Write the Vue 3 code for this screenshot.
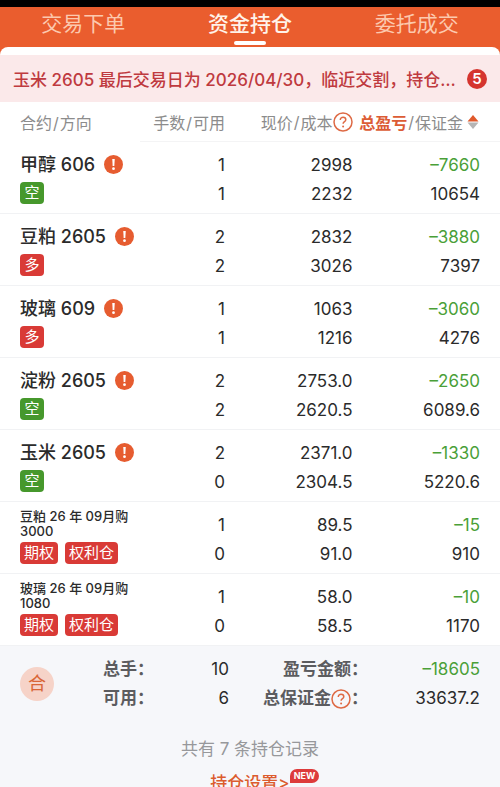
<script setup>
import { ref } from 'vue'

const tabs = ['交易下单', '资金持仓', '委托成交']
const activeTab = ref('资金持仓')

// side: short 空 / long 多 / option 期权
const positions = [
  { name: '甲醇 606', side: 'short', lots: [1, 1], price: ['2998', '2232'], profit: '7660', margin: '10654' },
  { name: '豆粕 2605', side: 'long', lots: [2, 2], price: ['2832', '3026'], profit: '3880', margin: '7397' },
  { name: '玻璃 609', side: 'long', lots: [1, 1], price: ['1063', '1216'], profit: '3060', margin: '4276' },
  { name: '淀粉 2605', side: 'short', lots: [2, 2], price: ['2753.0', '2620.5'], profit: '2650', margin: '6089.6' },
  { name: '玉米 2605', side: 'short', lots: [2, 0], price: ['2371.0', '2304.5'], profit: '1330', margin: '5220.6' },
  { name: '豆粕 26 年 09月购 3000', side: 'option', lots: [1, 0], price: ['89.5', '91.0'], profit: '15', margin: '910' },
  { name: '玻璃 26 年 09月购 1080', side: 'option', lots: [1, 0], price: ['58.0', '58.5'], profit: '10', margin: '1170' }
]

const tags = {
  short: ['空'],
  long: ['多'],
  option: ['期权', '权利仓']
}
</script>

<template>
  <div class="page">
    <nav class="tabs">
      <button
        v-for="tab in tabs"
        :key="tab"
        class="tab"
        :class="{ active: tab === activeTab }"
        @click="activeTab = tab"
      >{{ tab }}</button>
    </nav>

    <main class="sheet">
      <a href="#" class="notice">
        <span class="notice-text">玉米 2605 最后交易日为 2026/04/30，临近交割，持仓…</span>
        <span class="count">5</span>
      </a>

      <table class="positions">
        <thead>
          <tr>
            <th>合约<i>/</i>方向</th>
            <th>手数<i>/</i>可用</th>
            <th>
              <span class="head">现价<i>/</i>成本<button class="help" aria-label="成本说明">
                <svg viewBox="0 0 20 20"><circle cx="10" cy="10" r="9" /><path d="M7.3 8c0-1.6 1.1-2.7 2.8-2.7s2.7 1 2.7 2.4c0 2-2.7 2-2.7 4.1" /><circle class="dot" cx="10.1" cy="14.4" r="1" /></svg>
              </button></span>
            </th>
            <th>
              <button class="head sort">
                <b>总盈亏</b><i>/</i>保证金
                <svg viewBox="0 0 12 16"><path fill="#e0592c" d="M6 1 11.5 7.5H.5z" /><path fill="#b5b5b5" d="M6 15 .5 8.5h11z" /></svg>
              </button>
            </th>
          </tr>
        </thead>
        <tbody>
          <tr v-for="p in positions" :key="p.name">
            <td>
              <div class="name" :class="{ small: p.side === 'option' }">
                <span>{{ p.name }}</span>
                <svg v-if="p.side !== 'option'" class="warn" viewBox="0 0 18 18"><circle cx="9" cy="9" r="9" fill="#e65c30" /><path d="M7.8 3.7h2.4l-.4 6.7H8.2z" fill="#fff" /><circle cx="9" cy="13" r="1.3" fill="#fff" /></svg>
              </div>
              <div class="tags">
                <span v-for="t in tags[p.side]" :key="t" class="tag" :class="p.side">{{ t }}</span>
              </div>
            </td>
            <td><div v-for="(n, i) in p.lots" :key="i">{{ n }}</div></td>
            <td><div v-for="(n, i) in p.price" :key="i">{{ n }}</div></td>
            <td>
              <div class="loss">–{{ p.profit }}</div>
              <div>{{ p.margin }}</div>
            </td>
          </tr>
        </tbody>
      </table>

      <footer class="summary">
        <div class="totals">
          <span class="total-icon">合</span>
          <span class="label">总手：</span>
          <span class="value">10</span>
          <span class="label">盈亏金额：</span>
          <span class="value loss">–18605</span>
          <span class="label">可用：</span>
          <span class="value">6</span>
          <span class="label">总保证金<button class="help" aria-label="保证金说明">
            <svg viewBox="0 0 20 20"><circle cx="10" cy="10" r="9" /><path d="M7.3 8c0-1.6 1.1-2.7 2.8-2.7s2.7 1 2.7 2.4c0 2-2.7 2-2.7 4.1" /><circle class="dot" cx="10.1" cy="14.4" r="1" /></svg>
          </button>：</span>
          <span class="value">33637.2</span>
        </div>
        <p class="records">共有 7 条持仓记录</p>
        <a href="#" class="settings">持仓设置&gt;<span class="new">NEW</span></a>
      </footer>
    </main>
  </div>
</template>

<style>
body {
  margin: 0;
  background: #f6f7fa;
}
</style>

<style scoped>
.page {
  border-top: 7px solid #000;
  background: #ea5d2e;
  font-family: Inter, "Noto Sans CJK SC", sans-serif;
  font-size: 17px;
  color: #2b2b2b;
}

button {
  border: 0;
  padding: 0;
  background: none;
  font: inherit;
  color: inherit;
  cursor: pointer;
}

a {
  text-decoration: none;
}

.tabs {
  display: grid;
  grid-template-columns: repeat(3, 1fr);
  height: 40px;
}

.tab {
  position: relative;
  padding-bottom: 6px;
  font-size: 21px;
  line-height: 34px;
  color: #fcc9ae;
}

.tab.active {
  font-weight: 500;
  color: #fff3ea;
}

/* 选中下划线 */
.tab.active::after {
  content: "";
  position: absolute;
  left: 50%;
  bottom: 2px;
  width: 32px;
  height: 4px;
  margin-left: -16px;
  border-radius: 2px;
  background: #fff;
}

.sheet {
  padding-top: 8px;
  border-radius: 8px 8px 0 0;
  background: #fff;
}

.notice {
  display: flex;
  align-items: center;
  gap: 8px;
  height: 47px;
  padding: 0 13px;
  background: #fbe9ea;
  color: #bf3a3f;
  font-weight: 500;
}

.notice-text {
  flex: 1;
  overflow: hidden;
  white-space: nowrap;
  text-overflow: ellipsis;
}

.count {
  width: 20px;
  border-radius: 50%;
  background: #d5352f;
  color: #fff;
  font-size: 15px;
  font-weight: 600;
  line-height: 20px;
  text-align: center;
}

.positions {
  width: 100%;
  table-layout: fixed;
  border-collapse: separate;
  border-spacing: 0;
}

th {
  box-sizing: border-box;
  width: 17%;
  height: 40px;
  padding: 0;
  border-bottom: 1px solid #f4f4f5;
  font-size: 16px;
  font-weight: 400;
  color: #8c8c8c;
  text-align: right;
  white-space: nowrap;
}

th:first-child {
  width: 28%;
  padding-left: 20px;
  border-color: transparent;
  text-align: left;
}

th:nth-child(3) {
  width: 25.5%;
}

th:last-child {
  width: 29.5%;
}

th i {
  margin: 0 1px;
  font-style: normal;
}

.head {
  display: inline-flex;
  align-items: center;
  vertical-align: middle;
}

.sort b {
  font-weight: 700;
  color: #dc5c35;
}

.sort svg {
  width: 12px;
  height: 16px;
  margin: 0 1px 0 4px;
}

.help svg {
  display: block;
  width: 20px;
  height: 20px;
  fill: none;
  stroke: #de6a45;
  stroke-width: 1.5;
}

.help .dot {
  fill: #de6a45;
  stroke: none;
}

td {
  box-sizing: border-box;
  height: 72px;
  padding: 9px 0 0;
  border-bottom: 1px solid #f1f2f4;
  line-height: 29px;
  text-align: right;
  vertical-align: top;
}

td:first-child {
  padding-left: 20px;
  text-align: left;
}

th:last-child,
td:last-child {
  padding-right: 20px;
}

.name {
  display: flex;
  align-items: center;
  gap: 9px;
  height: 26px;
  margin-bottom: 5px;
  font-size: 18px;
  font-weight: 500;
  white-space: nowrap;
}

.name.small {
  font-size: 13px;
  line-height: 15px;
  white-space: normal;
}

.warn {
  width: 19px;
  height: 19px;
}

.tags {
  display: flex;
  gap: 7px;
}

.tag {
  box-sizing: border-box;
  min-width: 24px;
  padding: 0 4px;
  border-radius: 4px;
  background: #d93a36;
  color: #fff;
  font-size: 15px;
  line-height: 22px;
  text-align: center;
  white-space: nowrap;
}

.tag.short {
  background: #46982c;
}

.loss {
  color: #4a9f38;
}

.summary {
  display: flex;
  flex-direction: column;
  align-items: center;
  padding: 9px 20px 24px;
  background: #f6f7fa;
}

.totals {
  display: grid;
  grid-template-columns: 34px 100fr 75fr 139fr 112fr;
  align-self: stretch;
  line-height: 29px;
  text-align: right;
}

.total-icon {
  grid-row: span 2;
  align-self: center;
  border-radius: 50%;
  background: #f6d3c8;
  color: #d96536;
  font-size: 18px;
  line-height: 34px;
  text-align: center;
}

.label {
  display: flex;
  align-items: center;
  justify-content: flex-end;
  font-weight: 600;
  color: #5c5c5f;
  white-space: nowrap;
}

.records {
  margin: 22px 0 6px;
  line-height: 28px;
  color: #97989b;
}

.settings {
  position: relative;
  line-height: 28px;
  font-weight: 500;
  color: #dc5c2e;
}

.new {
  position: absolute;
  left: 100%;
  top: 0;
  padding: 0 4px;
  border-radius: 7px 7px 7px 0;
  background: #dd3b3b;
  color: #fff;
  font-size: 9px;
  font-weight: 700;
  line-height: 14px;
}
</style>
